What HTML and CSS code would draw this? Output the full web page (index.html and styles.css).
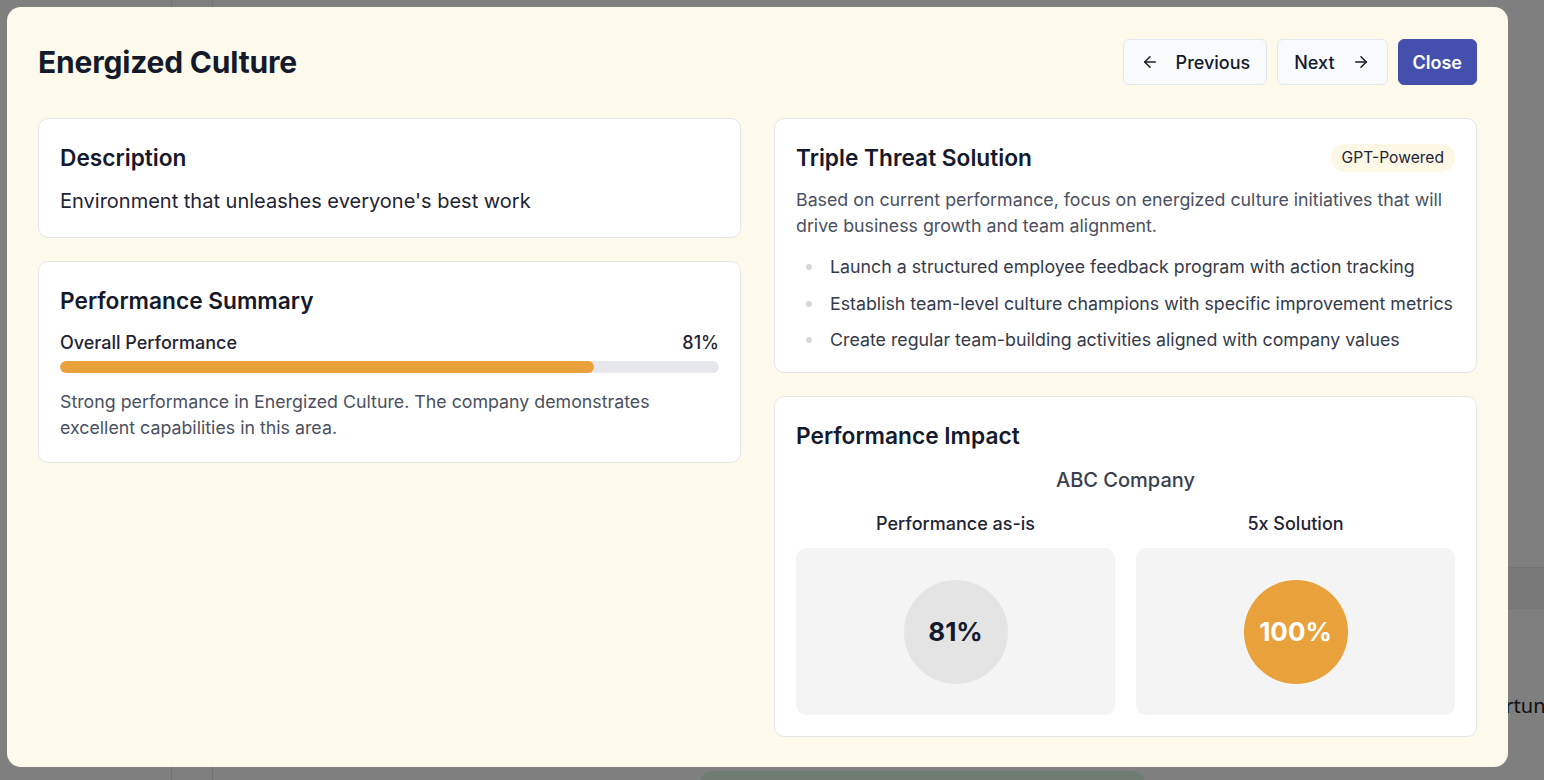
FILE: index.html
```html
<!DOCTYPE html>
<html lang="en">
<head>
<meta charset="utf-8">
<title>Energized Culture</title>
<link rel="stylesheet" href="styles.css">
</head>
<body>
<div class="app">
  <aside class="rail"></aside>
  <aside class="rail2"></aside>
  <main class="main">
    <div class="band"></div>
    <div class="opp">Opportunities</div>
    <div class="green"></div>
  </main>
</div>
<div class="overlay"></div>

<div class="modal" role="dialog">
  <header class="modal-head">
    <h1 class="modal-title">Energized Culture</h1>
    <div class="actions">
      <button class="btn btn-light">
        <svg class="ico" viewBox="0 0 24 24" width="18" height="18" fill="none" stroke="currentColor" stroke-width="2" stroke-linecap="round" stroke-linejoin="round"><path d="m12 19-7-7 7-7"/><path d="M19 12H5"/></svg>
        <span>Previous</span>
      </button>
      <button class="btn btn-light btn-next">
        <span>Next</span>
        <svg class="ico" viewBox="0 0 24 24" width="18" height="18" fill="none" stroke="currentColor" stroke-width="2" stroke-linecap="round" stroke-linejoin="round"><path d="M5 12h14"/><path d="m12 5 7 7-7 7"/></svg>
      </button>
      <button class="btn btn-primary">Close</button>
    </div>
  </header>

  <div class="grid">
    <div class="col">
      <section class="card">
        <h2 class="card-title">Description</h2>
        <p class="desc">Environment that unleashes everyone's best work</p>
      </section>
      <section class="card">
        <h2 class="card-title">Performance Summary</h2>
        <div class="metric-row">
          <span>Overall Performance</span>
          <span>81%</span>
        </div>
        <div class="bar"><div class="bar-fill" style="width:81%"></div></div>
        <p class="muted summary">Strong performance in Energized Culture. The company demonstrates excellent capabilities in this area.</p>
      </section>
    </div>

    <div class="col">
      <section class="card card-solution">
        <div class="title-row">
          <h2 class="card-title">Triple Threat Solution</h2>
          <span class="badge">GPT-Powered</span>
        </div>
        <p class="muted intro">Based on current performance, focus on energized culture initiatives that will drive business growth and team alignment.</p>
        <ul class="bullets">
          <li>Launch a structured employee feedback program with action tracking</li>
          <li>Establish team-level culture champions with specific improvement metrics</li>
          <li>Create regular team-building activities aligned with company values</li>
        </ul>
      </section>
      <section class="card">
        <h2 class="card-title">Performance Impact</h2>
        <div class="company">ABC Company</div>
        <div class="compare">
          <div class="cmp-col">
            <div class="cmp-label">Performance as-is</div>
            <div class="cmp-box"><div class="circle circle-gray">81%</div></div>
          </div>
          <div class="cmp-col">
            <div class="cmp-label">5x Solution</div>
            <div class="cmp-box"><div class="circle circle-orange">100%</div></div>
          </div>
        </div>
      </section>
    </div>
  </div>
</div>
</body>
</html>
```

FILE: styles.css
```css
* { box-sizing: border-box; }
html, body { margin: 0; padding: 0; }
body {
  font-family: Inter, "Noto Sans", "Liberation Sans", sans-serif;
  background: #ffffff;
  width: 1544px;
  height: 780px;
  overflow: hidden;
  color: #111827;
}

/* underlying app (dimmed by overlay) */
.app {
  display: flex;
  height: 780px;
}
.rail {
  width: 172px;
  background: #ffffff;
  border-right: 1px solid #e6e6e6;
}
.rail2 {
  width: 41px;
  background: #ffffff;
  border-right: 1px solid #e6e6e6;
}
.main {
  flex: 1;
  position: relative;
  background: #ffffff;
}
.band {
  position: absolute;
  left: 0; right: 0;
  top: 567px;
  height: 42px;
  background: #f2f2f2;
  border-top: 1px solid #e8e8e8;
  border-bottom: 1px solid #ececec;
}
.opp {
  position: absolute;
  left: 1240px;
  top: 692px;
  font-size: 20px;
  color: #222;
  font-family: "Noto Sans", sans-serif;
  white-space: nowrap;
}
.green {
  position: absolute;
  left: 487px;
  top: 771px;
  width: 445px;
  height: 40px;
  border-radius: 12px;
  background: #dff9e2;
}
.overlay {
  position: fixed;
  inset: 0;
  background: rgba(0, 0, 0, 0.5);
}

/* modal */
.modal {
  position: fixed;
  left: 7px;
  top: 7px;
  width: 1501px;
  height: 760px;
  background: #fefaeb;
  border-radius: 14px;
  padding: 32px 31px 31px 31px;
}
.modal-head {
  display: flex;
  align-items: center;
  justify-content: space-between;
  height: 46px;
  margin-bottom: 33px;
}
.modal-title {
  margin: 0;
  font-size: 30px;
  font-weight: 700;
  letter-spacing: -0.2px;
  color: #141a2c;
}
.actions {
  display: flex;
  gap: 10px;
}
.btn {
  height: 46px;
  display: flex;
  align-items: center;
  gap: 17px;
  font-family: inherit;
  font-size: 18px;
  font-weight: 500;
  border-radius: 6px;
  cursor: pointer;
}
.btn-light {
  background: #f8fafc;
  border: 1px solid #e2e8f0;
  color: #141a2c;
  padding: 0 16px 0 17px;
}
.btn-next { padding: 0 17px 0 16px; }
.btn-primary {
  background: #4550ae;
  border: 1px solid #4550ae;
  color: #ffffff;
  font-weight: 600;
  padding: 0 14px;
}
.ico { flex: none; }

.grid {
  display: grid;
  grid-template-columns: 1fr 1fr;
  gap: 33px;
}
.col {
  display: flex;
  flex-direction: column;
  gap: 23px;
}
.card {
  background: #ffffff;
  border: 1px solid #e3e6ec;
  border-radius: 10px;
  padding: 21px;
}
.card-solution { padding-bottom: 19px; }
.card-title {
  margin: 0;
  font-size: 22.7px;
  line-height: 36px;
  font-weight: 600;
  color: #141a2c;
}
.desc {
  margin: 10px 0 0;
  font-size: 20px;
  line-height: 30px;
  color: #1f2433;
}
.metric-row {
  display: flex;
  justify-content: space-between;
  margin-top: 12px;
  font-size: 18px;
  line-height: 24px;
  font-weight: 500;
  color: #1f2433;
}
.bar {
  margin-top: 6px;
  height: 12px;
  background: #e5e7eb;
  border-radius: 6px;
  overflow: hidden;
}
.bar-fill {
  height: 100%;
  background: #e9a23b;
  border-radius: 6px;
}
.muted {
  color: #4b5060;
  font-size: 17.8px;
  line-height: 26px;
}
.summary { margin: 16px 0 0; }

.title-row {
  display: flex;
  justify-content: space-between;
  align-items: center;
}
.badge {
  background: #fdf8e6;
  border-radius: 999px;
  padding: 4px 11px;
  font-size: 15.6px;
  line-height: 20px;
  color: #1f2433;
}
.intro { margin: 11px 0 0; }
.bullets {
  list-style: none;
  margin: 15px 0 0;
  padding: 0;
  display: flex;
  flex-direction: column;
  gap: 10.5px;
}
.bullets li {
  position: relative;
  padding-left: 34px;
  font-size: 17.8px;
  line-height: 26px;
  color: #343a4a;
}
.bullets li::before {
  content: "";
  position: absolute;
  left: 10px;
  top: 10px;
  width: 6px;
  height: 6px;
  border-radius: 50%;
  background: #d4d6dc;
}

.company {
  margin-top: 12px;
  text-align: center;
  font-size: 20px;
  line-height: 28px;
  font-weight: 500;
  color: #3a3f4c;
}
.compare {
  display: grid;
  grid-template-columns: 1fr 1fr;
  gap: 21px;
  margin-top: 18px;
}
.cmp-label {
  text-align: center;
  font-size: 18px;
  line-height: 24px;
  font-weight: 500;
  color: #1f2433;
  margin-bottom: 12px;
}
.cmp-box {
  height: 167px;
  background: #f4f4f4;
  border-radius: 10px;
  display: flex;
  align-items: center;
  justify-content: center;
}
.circle {
  width: 104px;
  height: 104px;
  border-radius: 50%;
  display: flex;
  align-items: center;
  justify-content: center;
  font-size: 26px;
  font-weight: 700;
}
.circle-gray { background: #e4e4e4; color: #141a2c; }
.circle-orange { background: #e9a23b; color: #ffffff; }
```
